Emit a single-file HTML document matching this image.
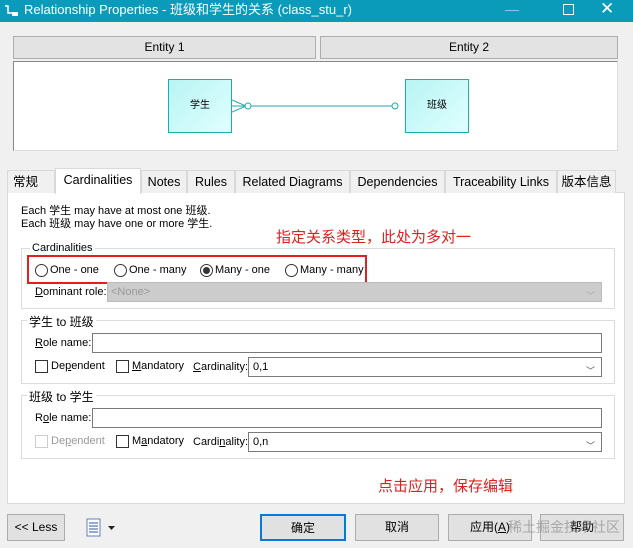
<!DOCTYPE html>
<html><head><meta charset="utf-8"><style>
*{box-sizing:border-box;margin:0;padding:0}
body{width:633px;height:548px;background:#f0f0f0;font-family:"Liberation Sans","Noto Sans CJK SC",sans-serif;font-size:11px;color:#000;position:relative;overflow:hidden}
.a{position:absolute;white-space:nowrap}
.title{left:0;top:0;width:633px;height:22px;background:#0a9bbb;color:#fff;font-size:13px;line-height:20px;padding-left:24px}
.hdr{background:#e3e3e3;border:1px solid #adadad;text-align:center;font-size:12px;line-height:20px}
.ent{background:linear-gradient(135deg,#b8f4f4,#e0ffff);border:1px solid #20aaaa;font-size:10px;text-align:center;line-height:52px}
.tab{top:170px;height:23px;border:1px solid #d9d9d9;border-bottom:none;background:#f0f0f0;font-size:12.5px;line-height:22px;text-align:center}
.gb{border:1px solid #dcdcdc}
.gt{background:#fff;padding:0 2px;font-size:11px}
.inp{background:#fff;border:1px solid #7a7a7a;height:20px;font-size:11px;line-height:18px;padding-left:4px}
.cb{width:13px;height:13px;border:1px solid #333;background:#fff}
.rd{width:13px;height:13px;border:1px solid #333;border-radius:50%;background:#fff}
.btn{top:514px;height:27px;border:1px solid #adadad;background:#e1e1e1;text-align:center;line-height:25px;font-size:12px}
.red{color:#e02020;font-size:15px}
.chev{right:6px;top:4px;color:#555;font-size:9px}
u{text-decoration:underline}
</style></head><body>
<div class="a title">Relationship Properties - 班级和学生的关系 (class_stu_r)</div>
<svg class="a" style="left:4px;top:5px" width="16" height="12"><path d="M1 1h3v7h4" stroke="#fff" stroke-width="1.5" fill="none"/><rect x="8" y="7" width="6" height="4" fill="#fff"/></svg>
<div class="a" style="left:505px;top:1px;color:#8fd3e2;font-size:14px">—</div>
<div class="a" style="left:563px;top:4px;width:11px;height:11px;border:1px solid #fff"></div>
<div class="a" style="left:600px;top:-1px;color:#fff;font-size:17px">✕</div>

<div class="a hdr" style="left:13px;top:36px;width:303px;height:23px">Entity 1</div>
<div class="a hdr" style="left:320px;top:36px;width:298px;height:23px">Entity 2</div>
<div class="a" style="left:13px;top:61px;width:605px;height:90px;background:#fff;border:1px solid #888;border-right-color:#ddd;border-bottom-color:#ddd"></div>
<div class="a ent" style="left:168px;top:79px;width:64px;height:54px">学生</div>
<div class="a ent" style="left:405px;top:79px;width:64px;height:54px">班级</div>
<svg class="a" style="left:232px;top:96px" width="173" height="20"><g stroke="#20aaaa" fill="#fff" stroke-width="1"><path d="M0 4L14 10L0 16M0 10H14"/><line x1="14" y1="10" x2="166" y2="10"/><circle cx="16" cy="10" r="3"/><circle cx="163" cy="10" r="3"/></g></svg>

<div class="a" style="left:7px;top:192px;width:618px;height:312px;background:#fff;border:1px solid #d9d9d9"></div>
<div class="a tab" style="left:7px;width:48px;text-align:left;padding-left:5px">常规</div>
<div class="a tab" style="left:55px;width:86px;top:168px;height:26px;background:#fff;border-color:#d9d9d9">Cardinalities</div>
<div class="a tab" style="left:141px;width:46px">Notes</div>
<div class="a tab" style="left:187px;width:48px">Rules</div>
<div class="a tab" style="left:235px;width:115px">Related Diagrams</div>
<div class="a tab" style="left:350px;width:95px">Dependencies</div>
<div class="a tab" style="left:445px;width:112px">Traceability Links</div>
<div class="a tab" style="left:557px;width:59px">版本信息</div>

<div class="a" style="left:21px;top:205px;line-height:13px;font-size:11px">Each 学生 may have at most one 班级.<br>Each 班级 may have one or more 学生.</div>
<div class="a red" style="left:276px;top:226px">指定关系类型，此处为多对一</div>

<div class="a gb" style="left:21px;top:248px;width:594px;height:61px"></div>
<div class="a gt" style="left:30px;top:242px">Cardinalities</div>
<div class="a" style="left:27px;top:255px;width:340px;height:29px;border:2px solid #e02020"></div>
<div class="a rd" style="left:35px;top:264px"></div><div class="a" style="left:50px;top:264px">One - one</div>
<div class="a rd" style="left:114px;top:264px"></div><div class="a" style="left:129px;top:264px">One - many</div>
<div class="a rd" style="left:200px;top:264px"><div class="a" style="left:2px;top:2px;width:7px;height:7px;border-radius:50%;background:#333"></div></div><div class="a" style="left:215px;top:264px">Many - one</div>
<div class="a rd" style="left:285px;top:264px"></div><div class="a" style="left:300px;top:264px">Many - many</div>
<div class="a" style="left:35px;top:286px"><u>D</u>ominant role:</div>
<div class="a" style="left:107px;top:282px;width:495px;height:20px;background:#ccc;border:1px solid #bbb;color:#999;padding-left:3px;line-height:18px">&lt;None&gt;<span class="a chev" style="color:#aaa">﹀</span></div>

<div class="a gb" style="left:21px;top:320px;width:594px;height:64px"></div>
<div class="a gt" style="left:27px;top:313px;font-size:12px">学生 to 班级</div>
<div class="a" style="left:35px;top:337px"><u>R</u>ole name:</div>
<div class="a inp" style="left:92px;top:333px;width:510px"></div>
<div class="a cb" style="left:35px;top:360px"></div><div class="a" style="left:51px;top:360px">De<u>p</u>endent</div>
<div class="a cb" style="left:116px;top:360px"></div><div class="a" style="left:132px;top:360px"><u>M</u>andatory</div>
<div class="a" style="left:193px;top:361px"><u>C</u>ardinality:</div>
<div class="a inp" style="left:248px;top:357px;width:354px">0,1<span class="a chev">﹀</span></div>

<div class="a gb" style="left:21px;top:395px;width:594px;height:64px"></div>
<div class="a gt" style="left:27px;top:388px;font-size:12px">班级 to 学生</div>
<div class="a" style="left:35px;top:412px">R<u>o</u>le name:</div>
<div class="a inp" style="left:92px;top:408px;width:510px"></div>
<div class="a cb" style="left:35px;top:435px;border-color:#ccc"></div><div class="a" style="left:51px;top:435px;color:#999">De<u>p</u>endent</div>
<div class="a cb" style="left:116px;top:435px"></div><div class="a" style="left:132px;top:435px">M<u>a</u>ndatory</div>
<div class="a" style="left:193px;top:436px">Cardi<u>n</u>ality:</div>
<div class="a inp" style="left:248px;top:432px;width:354px">0,n<span class="a chev">﹀</span></div>

<div class="a red" style="left:378px;top:475px">点击应用，保存编辑</div>

<div class="a btn" style="left:7px;width:58px">&lt;&lt; Less</div>
<svg class="a" style="left:86px;top:518px" width="32" height="20"><rect x="1" y="1" width="13" height="17" fill="#fff" stroke="#6080c0"/><path d="M3 5h9M3 8h9M3 11h9M3 14h9" stroke="#3050a0"/><path d="M22 8h7l-3.5 4z" fill="#222"/></svg>
<div class="a btn" style="left:260px;width:86px;border:2px solid #0a78d7">确定</div>
<div class="a btn" style="left:355px;width:84px">取消</div>
<div class="a btn" style="left:448px;width:84px">应用(<u>A</u>)</div>
<div class="a btn" style="left:540px;width:84px">帮助</div>
<div class="a" style="left:508px;top:517px;color:rgba(120,120,120,.55);font-size:14px">稀土掘金技术社区</div>
</body></html>
